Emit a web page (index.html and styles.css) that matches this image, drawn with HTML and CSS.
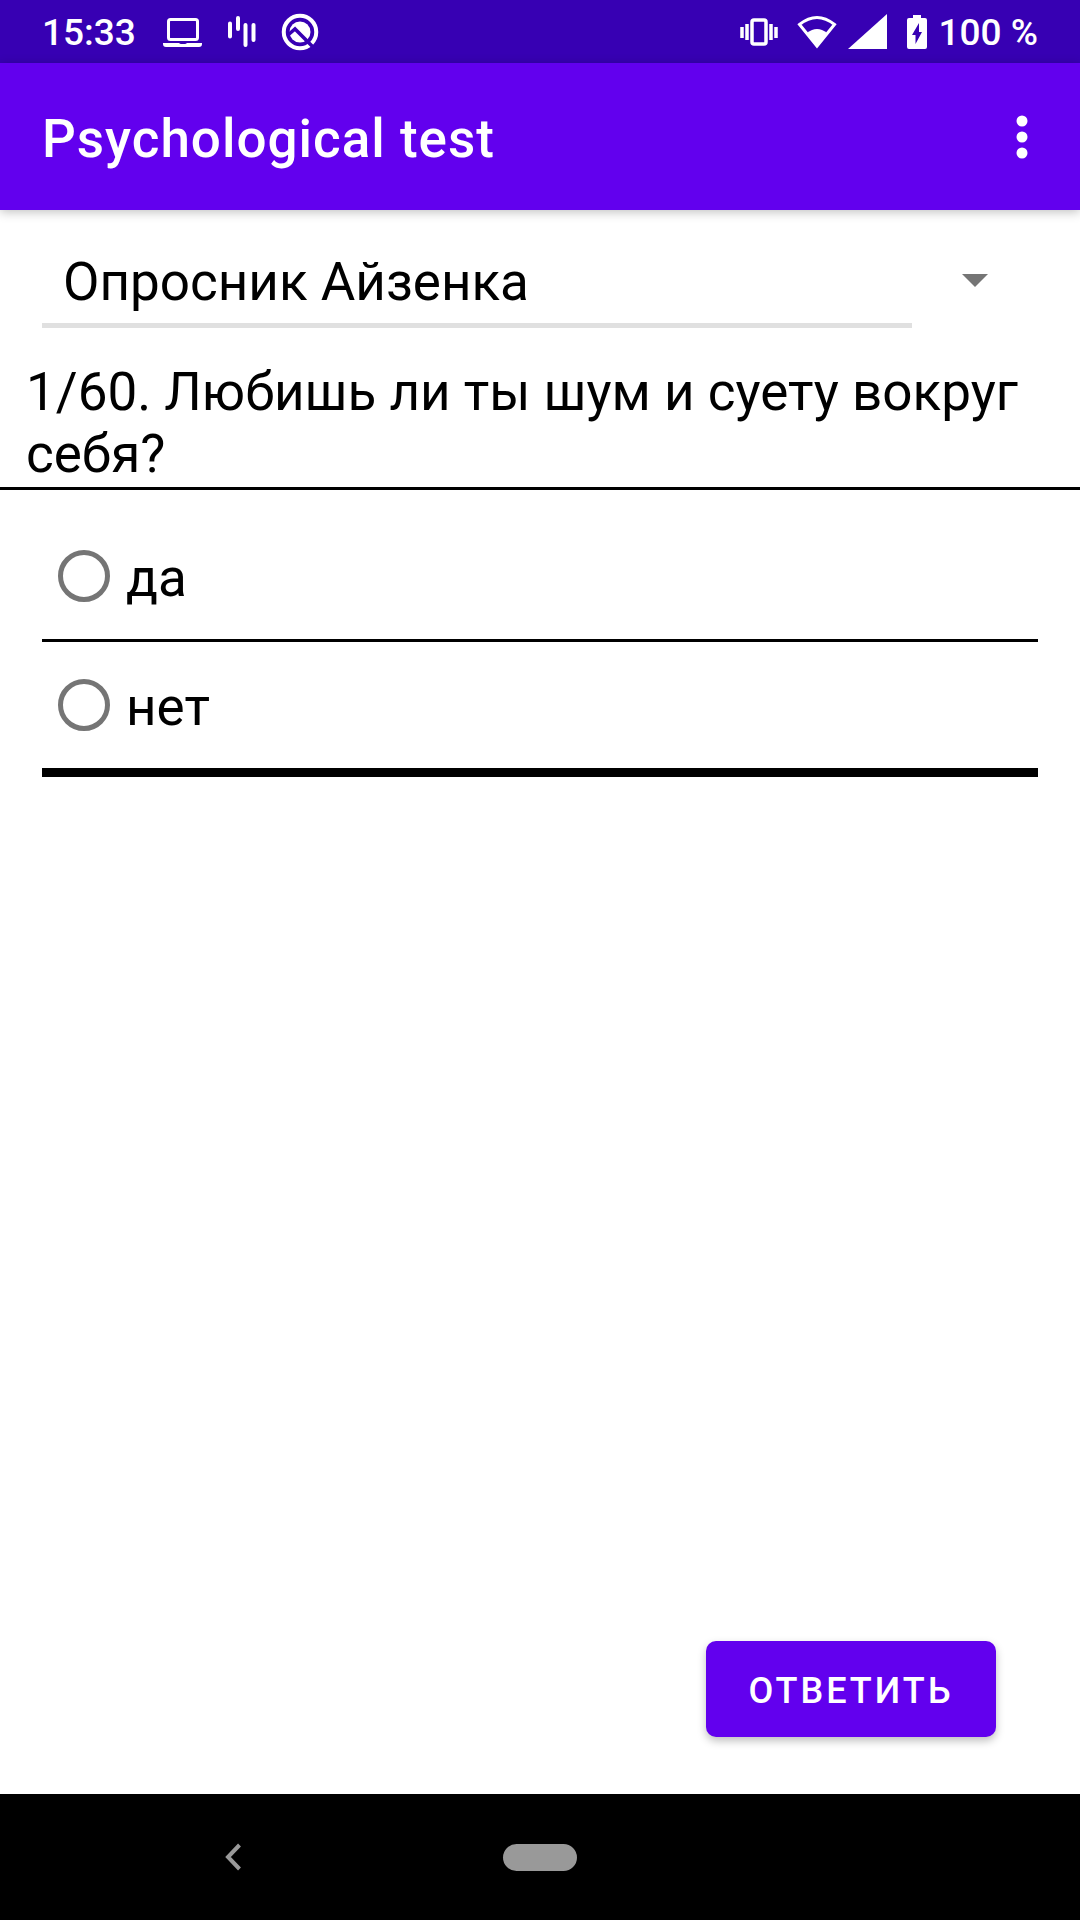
FILE: index.html
```html
<!DOCTYPE html>
<html lang="ru">
<head>
<meta charset="utf-8">
<meta name="viewport" content="width=device-width, initial-scale=1">
<title>Psychological test</title>
<link rel="stylesheet" href="styles.css">
</head>
<body>
<div class="status-bar">
  <div class="status-group status-left">
    <span class="status-text">15:33</span>
    <svg class="icon-laptop" width="40" height="32" viewBox="0 0 40 32" aria-hidden="true">
      <rect x="5.500" y="3.500" width="29" height="20" rx="2" fill="none" stroke="#fff" stroke-width="3"/>
      <path d="M0 27h16q1 1 2 1h4q1 0 2-1h15v1q0 3-3 3H3q-3 0-3-3z" fill="#fff"/>
    </svg>
    <svg class="icon-bars" width="30" height="34" viewBox="0 0 30 34" fill="none" stroke="#fff" stroke-width="4" stroke-linecap="round" aria-hidden="true">
      <path d="M3 8.500v13M11 3v11M18.500 10v20M26.500 10v15"/>
    </svg>
    <svg class="icon-q" width="38" height="38" viewBox="0 0 38 38" aria-hidden="true">
      <circle cx="19" cy="19" r="16.250" fill="none" stroke="#fff" stroke-width="4"/>
      <circle cx="19" cy="19" r="10.500" fill="#fff"/>
      <path d="M7 22l7-6L35 37" fill="none" stroke="#3700b3" stroke-width="3.500"/>
    </svg>
  </div>
  <div class="status-group status-right">
    <svg class="icon-vibrate" width="38" height="30" viewBox="0 0 38 30" fill="none" stroke="#fff" stroke-width="3.500" aria-hidden="true">
      <rect x="12" y="3" width="14" height="24" rx="2"/>
      <path d="M2 10v11M7 7v16M31 7v16M36 10v11"/>
    </svg>
    <svg class="icon-wifi" width="40" height="34" viewBox="0 0 40 34" aria-hidden="true">
      <path d="M2.500 9.500Q20-4.500 37.500 9.500L20 31z" fill="none" stroke="#fff" stroke-width="3"/>
      <path d="M10 18Q20 10 30 18L20 31z" fill="#fff"/>
    </svg>
    <svg class="icon-signal" width="39" height="35" viewBox="0 0 39 35" aria-hidden="true"><path d="M0 35L39 0v35z" fill="#fff"/></svg>
    <svg class="icon-battery" width="20" height="34" viewBox="0 0 20 34" aria-hidden="true">
      <path d="M6 0h8v3h4q2 0 2 2v27q0 2-2 2H2q-2 0-2-2V5q0-2 2-2h4z" fill="#fff"/>
      <path d="M12 8v9h3L8.500 29v-9H5z" fill="#3700b3"/>
    </svg>
    <span class="status-text">100 %</span>
  </div>
</div>
<header class="app-bar">
  <h1 class="app-title">Psychological test</h1>
  <button class="menu-button" type="button" aria-label="Menu">
    <svg width="12" height="44" viewBox="0 0 12 44" fill="#fff" aria-hidden="true"><circle cx="6" cy="6" r="5.500"/><circle cx="6" cy="22" r="5.500"/><circle cx="6" cy="38" r="5.500"/></svg>
  </button>
</header>
<main class="content">
  <form class="test-form">
    <div class="picker">
      <select class="picker-select" aria-label="Опросник"><option>Опросник Айзенка</option></select>
      <svg class="picker-arrow" width="26" height="13" viewBox="0 0 26 13" aria-hidden="true"><path d="M0 0h26L13 13z" fill="#757575"/></svg>
    </div>
    <p class="question" id="question">1/60. Любишь ли ты шум и суету вокруг себя?</p>
    <div class="answers" role="radiogroup" aria-labelledby="question">
      <label class="answer"><input class="answer-radio" type="radio" name="answer" value="yes"><span class="answer-text">да</span></label>
      <label class="answer"><input class="answer-radio" type="radio" name="answer" value="no"><span class="answer-text">нет</span></label>
    </div>
    <div class="actions"><button class="submit-button" type="submit">ОТВЕТИТЬ</button></div>
  </form>
</main>
<nav class="nav-bar">
  <button class="nav-button" type="button" aria-label="Back">
    <svg width="16" height="28" viewBox="0 0 16 28" fill="none" stroke="#999" stroke-width="4" aria-hidden="true"><path d="M14.500 2L3 14l11.500 12"/></svg>
  </button>
  <button class="nav-button" type="button" aria-label="Home"><span class="home-pill"></span></button>
</nav>
</body>
</html>
```
FILE: styles.css
```css
* { box-sizing: border-box; }

body {
  margin: 0;
  min-height: 100vh;
  display: flex;
  flex-direction: column;
  background: #fff;
  color: #000;
  font-family: Roboto, "Noto Sans", sans-serif;
  font-size: 53px;
  line-height: 62px;
}

svg { display: block; flex: none; }

button {
  border: 0;
  padding: 0;
  background: none;
  font-family: inherit;
}

.status-bar {
  display: flex;
  justify-content: space-between;
  height: 63px;
  padding: 0 42px;
  background: #3700b3;
  color: #fff;
  font-size: 37px;
  font-weight: 500;
}

.status-group { display: flex; align-items: center; }
.status-left { gap: 24px; }
.status-right { gap: 11px; }
.status-text { padding-top: 3px; }
.icon-laptop { margin-left: 3px; }
.icon-wifi { margin-left: 8px; }
.icon-battery { margin-left: 9px; }

.app-bar {
  display: flex;
  align-items: center;
  justify-content: space-between;
  height: 147px;
  padding: 0 42px;
  background: #6200ee;
  color: #fff;
  box-shadow: 0 2px 10px rgba(0, 0, 0, 0.25);
}

.app-title {
  margin: 0;
  padding-top: 4px;
  font-size: 53px;
  font-weight: 500;
  letter-spacing: 1px;
}

.menu-button {
  display: flex;
  justify-content: center;
  width: 32px;
}

.content {
  flex: 1;
  display: flex;
}

.test-form {
  flex: 1;
  display: flex;
  flex-direction: column;
}

.picker {
  display: flex;
  align-items: center;
  margin-top: 32px;
  padding: 0 92px 0 42px;
  gap: 50px;
}

.picker-select {
  flex: 1;
  min-width: 0;
  height: 86px;
  padding: 0 21px 1px;
  border: 0;
  border-bottom: 5px solid #e0e0e0;
  border-radius: 0;
  appearance: none;
  background: none;
  color: inherit;
  font: inherit;
}

.picker-arrow { margin-bottom: 9px; }

.question {
  margin: 33px 0 0;
  padding: 0 26px 2px;
  border-bottom: 3px solid #000;
}

.answers {
  display: flex;
  flex-direction: column;
  margin: 23px 42px 0;
  border-bottom: 9px solid #000;
}

.answer {
  display: flex;
  align-items: center;
  gap: 16px;
  height: 126px;
  padding-left: 16px;
}

.answer + .answer {
  height: 129px;
  border-top: 3px solid #000;
}

.answer-text { padding-top: 3px; }

.answer-radio {
  appearance: none;
  width: 52px;
  height: 52px;
  margin: 0;
  border: 5px solid #757575;
  border-radius: 50%;
}

.answer-radio:checked {
  border-color: #6200ee;
  background: radial-gradient(#6200ee 45%, transparent 48%);
}

.actions {
  display: flex;
  justify-content: flex-end;
  margin-top: auto;
  padding: 0 84px 57px;
}

.submit-button {
  width: 290px;
  height: 96px;
  padding-top: 3px;
  border-radius: 10px;
  background: #6200ee;
  box-shadow: 0 4px 8px rgba(0, 0, 0, 0.25);
  color: #fff;
  font-size: 36px;
  font-weight: 500;
  letter-spacing: 3px;
}

.nav-bar {
  display: grid;
  grid-template-columns: 1fr 74px 1fr;
  align-items: center;
  height: 126px;
  background: #000;
}

.nav-button {
  display: flex;
  justify-content: center;
}

.nav-button:first-child { padding-right: 38px; }

.home-pill {
  width: 74px;
  height: 27px;
  border-radius: 14px;
  background: #999;
}
```
